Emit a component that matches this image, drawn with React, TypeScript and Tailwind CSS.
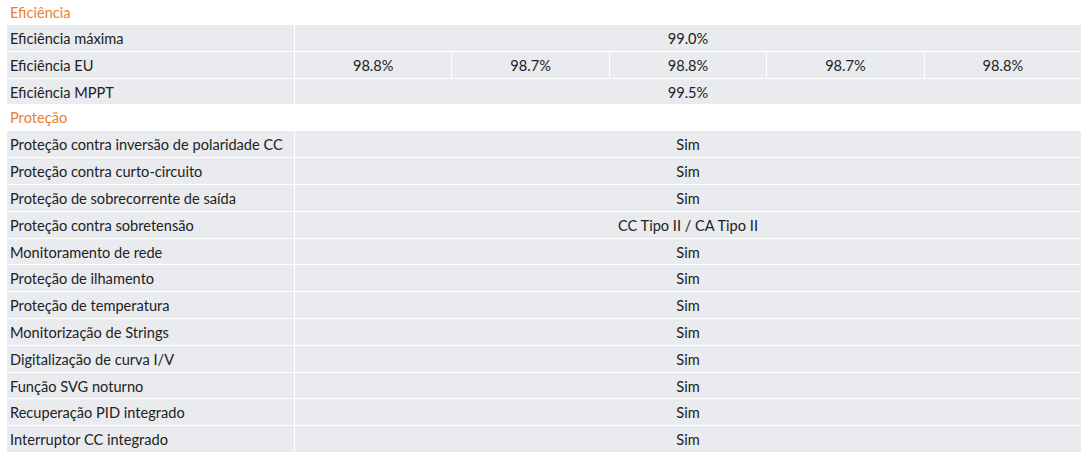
const eficiencia: { label: string; values: string[] }[] = [
  { label: 'Eficiência máxima', values: ['99.0%'] },
  { label: 'Eficiência EU', values: ['98.8%', '98.7%', '98.8%', '98.7%', '98.8%'] },
  { label: 'Eficiência MPPT', values: ['99.5%'] },
];

const protecao: { label: string; values: string[] }[] = [
  { label: 'Proteção contra inversão de polaridade CC', values: ['Sim'] },
  { label: 'Proteção contra curto-circuito', values: ['Sim'] },
  { label: 'Proteção de sobrecorrente de saída', values: ['Sim'] },
  { label: 'Proteção contra sobretensão', values: ['CC Tipo II / CA Tipo II'] },
  { label: 'Monitoramento de rede', values: ['Sim'] },
  { label: 'Proteção de ilhamento', values: ['Sim'] },
  { label: 'Proteção de temperatura', values: ['Sim'] },
  { label: 'Monitorização de Strings', values: ['Sim'] },
  { label: 'Digitalização de curva I/V', values: ['Sim'] },
  { label: 'Função SVG noturno', values: ['Sim'] },
  { label: 'Recuperação PID integrado', values: ['Sim'] },
  { label: 'Interruptor CC integrado', values: ['Sim'] },
];

function Row({ label, values }: { label: string; values: string[] }) {
  return (
    <div className="flex h-[26.8px] border-b border-white">
      <div className="w-[288px] shrink-0 bg-[#e9ebee] border-r border-white pl-[3px] pt-[2px] flex items-center whitespace-nowrap">
        {label}
      </div>
      <div className="flex-1 flex gap-px">
        {values.map((v, i) => (
          <div key={i} className="flex-1 bg-[#e9ebee] pt-[2px] flex items-center justify-center">
            {v}
          </div>
        ))}
      </div>
    </div>
  );
}

function Section({ title, rows, head }: { title: string; rows: { label: string; values: string[] }[]; head: string }) {
  return (
    <div>
      <div className={`${head} flex items-center pl-[3px] text-[#e8832f]`}>{title}</div>
      {rows.map((r) => (
        <Row key={r.label} label={r.label} values={r.values} />
      ))}
    </div>
  );
}

export default function App() {
  return (
    <div
      className="w-[1090px] h-[456px] bg-white pl-[7px] pr-[9px] text-[14.6px] text-[#222222] overflow-hidden"
      style={{ fontFamily: 'Lato, "Liberation Sans", sans-serif' }}
    >
      <Section title="Eficiência" rows={eficiencia} head="h-[25px]" />
      <Section title="Proteção" rows={protecao} head="h-[26px]" />
    </div>
  );
}
